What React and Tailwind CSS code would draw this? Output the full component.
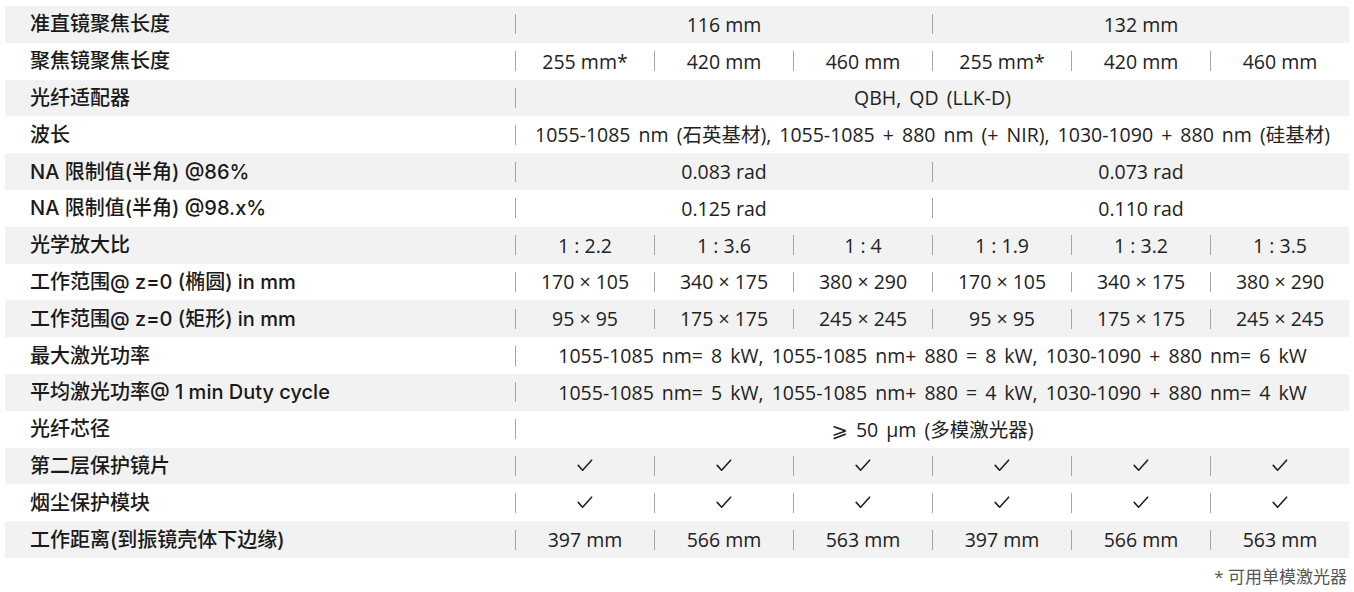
import React from "react";

const labelFont = { fontFamily: '"Inter", "Noto Sans CJK SC", sans-serif' };
const valFont = { fontFamily: '"Open Sans", "Noto Sans CJK SC", "DejaVu Sans", sans-serif' };

const Check = () => (
  <svg width="16" height="13" viewBox="0 0 16 13" fill="none">
    <path d="M1.2 6.4 L5.6 11.2 L14.6 1.2" stroke="#222" strokeWidth="1.6" strokeLinecap="round" strokeLinejoin="round" />
  </svg>
);

const CHECK = "__check__";

const rows = [
  ["准直镜聚焦长度", [["116 mm", 3], ["132 mm", 3]]],
  ["聚焦镜聚焦长度", [["255 mm*", 1], ["420 mm", 1], ["460 mm", 1], ["255 mm*", 1], ["420 mm", 1], ["460 mm", 1]]],
  ["光纤适配器", [["QBH, QD (LLK-D)", 6]]],
  ["波长", [["1055-1085 nm (石英基材), 1055-1085 + 880 nm (+ NIR), 1030-1090 + 880 nm (硅基材)", 6]]],
  ["NA 限制值(半角) @86%", [["0.083 rad", 3], ["0.073 rad", 3]]],
  ["NA 限制值(半角) @98.x%", [["0.125 rad", 3], ["0.110 rad", 3]]],
  ["光学放大比", [["1 : 2.2", 1], ["1 : 3.6", 1], ["1 : 4", 1], ["1 : 1.9", 1], ["1 : 3.2", 1], ["1 : 3.5", 1]]],
  ["工作范围@ z=0 (椭圆) in mm", [["170 × 105", 1], ["340 × 175", 1], ["380 × 290", 1], ["170 × 105", 1], ["340 × 175", 1], ["380 × 290", 1]]],
  ["工作范围@ z=0 (矩形) in mm", [["95 × 95", 1], ["175 × 175", 1], ["245 × 245", 1], ["95 × 95", 1], ["175 × 175", 1], ["245 × 245", 1]]],
  ["最大激光功率", [["1055-1085 nm= 8 kW, 1055-1085 nm+ 880 = 8 kW, 1030-1090 + 880 nm= 6 kW", 6]]],
  ["平均激光功率@ 1 min Duty cycle", [["1055-1085 nm= 5 kW, 1055-1085 nm+ 880 = 4 kW, 1030-1090 + 880 nm= 4 kW", 6]]],
  ["光纤芯径", [["⩾ 50 µm (多模激光器)", 6]]],
  ["第二层保护镜片", [[CHECK, 1], [CHECK, 1], [CHECK, 1], [CHECK, 1], [CHECK, 1], [CHECK, 1]]],
  ["烟尘保护模块", [[CHECK, 1], [CHECK, 1], [CHECK, 1], [CHECK, 1], [CHECK, 1], [CHECK, 1]]],
  ["工作距离(到振镜壳体下边缘)", [["397 mm", 1], ["566 mm", 1], ["563 mm", 1], ["397 mm", 1], ["566 mm", 1], ["563 mm", 1]]],
];

const spanClass = { 1: "col-span-1", 3: "col-span-3", 6: "col-span-6" };

export default function App() {
  return (
    <div className="w-[1354px] h-[592px] bg-white overflow-hidden pt-[6px] px-[5px]">
      <div className="grid grid-cols-[510px_repeat(6,minmax(0,1fr))]">
        {rows.map(([label, cells], i) => {
          const bg = i % 2 === 0 ? "bg-[#f2f2f2]" : "bg-white";
          return (
            <React.Fragment key={i}>
              <div
                className={`${bg} h-[36.8px] flex items-center pl-[25px] text-[20px] font-medium text-[#1a1a1a] whitespace-nowrap`}
                style={labelFont}
              >
                {label}
              </div>
              {cells.map(([v, span], j) => (
                <div key={j} className={`${bg} ${spanClass[span]} h-[36.8px] flex items-center`}>
                  <div className="w-px h-5 bg-[#a6a6a6] shrink-0" />
                  <div
                    className={`flex-1 flex items-center justify-center text-[19.5px] text-[#222] whitespace-nowrap ${span === 6 ? "[word-spacing:3px]" : ""}`}
                    style={valFont}
                  >
                    {v === CHECK ? <Check /> : v}
                  </div>
                </div>
              ))}
            </React.Fragment>
          );
        })}
      </div>
      <div
        className="flex justify-end pr-[2px] mt-[9px] text-[17px] leading-5 text-[#555]"
        style={valFont}
      >
        * 可用单模激光器
      </div>
    </div>
  );
}
